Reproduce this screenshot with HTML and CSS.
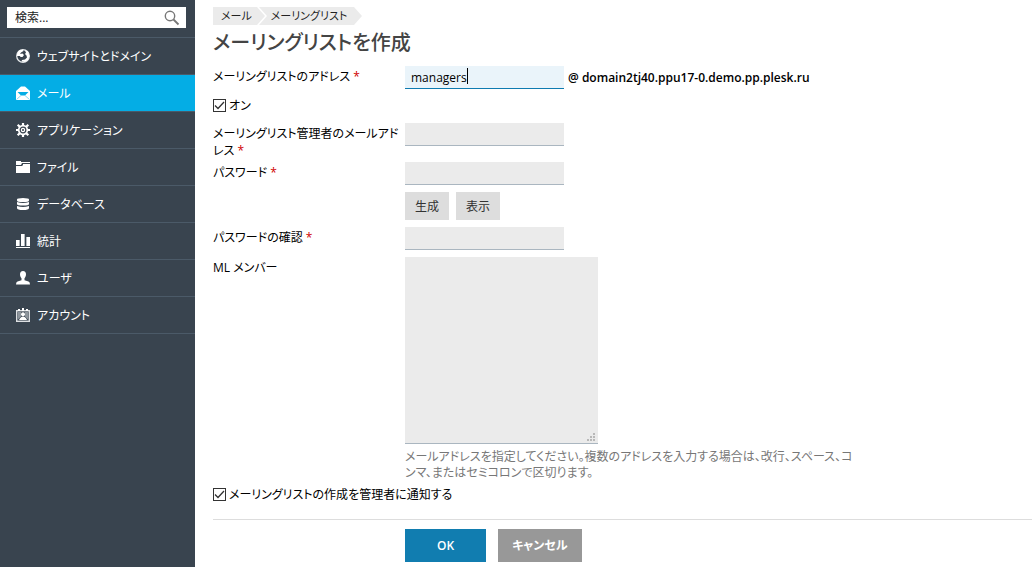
FILE: index.html
```html
<!DOCTYPE html>
<html lang="ja">
<head>
    <meta charset="UTF-8">
    <meta name="viewport" content="width=device-width, initial-scale=1.0">
    <title>メーリングリストを作成</title>
    <link rel="stylesheet" href="styles.css">
</head>
<body>
    <aside class="sidebar">
        <form class="search" role="search">
            <input type="text" class="search-input" placeholder="検索..." aria-label="検索">
            <button type="submit" class="search-button" aria-label="検索">
                <svg width="16" height="16" viewBox="0 0 16 16" fill="none" stroke="#777"><circle cx="6" cy="6" r="4.7" stroke-width="1.4"/><path d="M9.5 9.5l5 5" stroke-width="1.8"/></svg>
            </button>
        </form>
        <nav class="menu">
            <a href="#" class="menu-item">
                <svg width="14" height="14" viewBox="0 0 14 14"><circle cx="7" cy="7" r="6.3" fill="#39444f" stroke="#e4e7e9" stroke-width="1.3"/><path fill="#fff" d="M1 5l2-3.500L7 .5 7.500 2 5 3.500l-1 1.500 2.500-.5L8 6 6.500 8 4.500 8 4 7 1 7zM8.500 1l3.500 1.500L13.500 7 12 11 9 13 5.500 12.500 6 11 9 10.500 11 8.500 10.500 6.500 9 5 10 3.500z"/></svg>
                ウェブサイトとドメイン
            </a>
            <a href="#" class="menu-item active">
                <svg width="14" height="14" viewBox="0 0 14 14"><path d="M0 5l5-4.500h4L14 5v9H0z" fill="#fff"/><path d="M1.500 6h11L9 9.500H5z" fill="#04ade5"/><path d="M3 6l1-2h6l1 2z" fill="#fff"/><path d="M.5 13.500L5 9.500M13.500 13.500L9 9.500" stroke="#6cceef" stroke-width=".8"/></svg>
                メール
            </a>
            <a href="#" class="menu-item">
                <svg width="14" height="14" viewBox="0 0 14 14" fill="none" stroke="#fff"><circle cx="7" cy="7" r="4.300" stroke-width="1.700"/><circle cx="7" cy="7" r="1.600" stroke-width="1.200"/><path stroke-width="2.200" d="M7 0v2.500M7 11.500V14M0 7h2.500M11.500 7H14M1.700 1.700L4 4M10 10l2.300 2.300M12.300 1.700L10 4M4 10l-2.300 2.300"/></svg>
                アプリケーション
            </a>
            <a href="#" class="menu-item">
                <svg width="14" height="14" viewBox="0 0 14 14" fill="#fff"><path d="M0 1h5v1h9v1H6L5 5H0zM7 4h7v1H7z"/><path d="M0 6h6l1-1h7v8H0z"/></svg>
                ファイル
            </a>
            <a href="#" class="menu-item">
                <svg width="14" height="14" viewBox="0 0 14 14" fill="#fff"><path d="M1 2.500Q1 1 7 1t6 1.500v1Q13 5 7 5T1 3.500zM1 5q6 2.200 12 0v2q0 1.500-6 1.500T1 7zM1 9q6 2.200 12 0v2q0 2-6 2t-6-2z"/></svg>
                データベース
            </a>
            <a href="#" class="menu-item">
                <svg width="14" height="14" viewBox="0 0 14 14" fill="#fff"><path d="M0 6h4v6H0zM5 0h4v12H5zM10 3h4v9h-4zM0 13h14v1H0z"/><path d="M3 6h1v6H3zM8 0h1v12H8zM10 3h1v9h-1z" fill="#b5babe"/></svg>
                統計
            </a>
            <a href="#" class="menu-item">
                <svg width="14" height="14" viewBox="0 0 14 14" fill="#fff"><path d="M7 0c2 0 3 1.300 3 3.300 0 1.800-.7 3-1.500 3.900V9.200l4 1.300Q14 11 14 13.500H0Q0 11 1.500 10.500l4-1.300V7.200C4.700 6.300 4 5.100 4 3.300 4 1.300 5 0 7 0z"/></svg>
                ユーザ
            </a>
            <a href="#" class="menu-item">
                <svg width="14" height="14" viewBox="0 0 14 14" fill="#fff"><rect x=".7" y="2.700" width="12.600" height="10.600" fill="none" stroke="#dde0e3" stroke-width="1.400"/><path d="M2 1h2v2H2zM10 1h2v2h-2zM6 0h2v3H6z"/><path d="M2 4h3v4.500L2 11.500zM12 4H9v4.500l3 3z" fill="#8d959c"/><circle cx="7" cy="6.200" r="2"/><path d="M3 12Q4.500 8.500 7 8.500T11 12z"/></svg>
                アカウント
            </a>
        </nav>
    </aside>

    <main class="content">
        <nav class="breadcrumbs">
            <a href="#" class="crumb">メール</a>
            <a href="#" class="crumb">メーリングリスト</a>
        </nav>
        <h1>メーリングリストを作成</h1>

        <form class="form">
            <div class="row">
                <label class="row-label" for="address">メーリングリストのアドレス <span class="required">*</span></label>
                <div class="field field-inline">
                    <div class="focus-wrap">
                        <input type="text" id="address" class="text-input focused" value="managers">
                        <span class="caret"></span>
                    </div>
                    <span class="domain">@ domain2tj40.ppu17-0.demo.pp.plesk.ru</span>
                </div>
            </div>
            <div class="check-row">
                <input type="checkbox" id="enabled" class="checkbox" checked>
                <label for="enabled">オン</label>
            </div>
            <div class="row">
                <label class="row-label" for="admin">メーリングリスト管理者のメールアドレス <span class="required">*</span></label>
                <div class="field"><input type="text" id="admin" class="text-input"></div>
            </div>
            <div class="row">
                <label class="row-label" for="password">パスワード <span class="required">*</span></label>
                <div class="field">
                    <input type="password" id="password" class="text-input">
                    <div class="password-tools">
                        <button type="button" class="small-button">生成</button>
                        <button type="button" class="small-button">表示</button>
                    </div>
                </div>
            </div>
            <div class="row">
                <label class="row-label" for="confirm">パスワードの確認 <span class="required">*</span></label>
                <div class="field"><input type="password" id="confirm" class="text-input"></div>
            </div>
            <div class="row">
                <label class="row-label" for="members">ML メンバー</label>
                <div class="field members-field">
                    <div class="members-wrap">
                        <textarea id="members" class="members"></textarea>
                        <svg class="grip" width="8" height="8" viewBox="0 0 8 8" fill="#b8b8b8"><path d="M6 0h2v2H6zM3 3h2v2H3zM6 3h2v2H6zM0 6h2v2H0zM3 6h2v2H3zM6 6h2v2H6z"/></svg>
                    </div>
                    <p class="hint">メールアドレスを指定してください。複数のアドレスを入力する場合は、改行、スペース、コンマ、またはセミコロンで区切ります。</p>
                </div>
            </div>
            <div class="check-row">
                <input type="checkbox" id="notify" class="checkbox" checked>
                <label for="notify">メーリングリストの作成を管理者に通知する</label>
            </div>
            <div class="actions">
                <button type="submit" class="action-button ok">OK</button>
                <button type="button" class="action-button cancel">キャンセル</button>
            </div>
        </form>
    </main>
</body>
</html>
```
FILE: styles.css
```css
* {
    margin: 0;
    padding: 0;
    box-sizing: border-box;
}
body {
    display: flex;
    min-height: 100vh;
    background: #fff;
    color: #000;
    font-family: "Open Sans", "Noto Sans CJK JP", sans-serif;
    font-size: 12px;
    line-height: 17px;
    font-feature-settings: "palt";
}
input, textarea, button {
    font: inherit;
    font-feature-settings: inherit;
    border: none;
    border-radius: 0;
    outline: none;
}
button {
    cursor: pointer;
}

/* sidebar */
.sidebar {
    flex: none;
    width: 195px;
    background: #39444f;
}
.search {
    display: flex;
    height: 21px;
    margin: 7px 9px 9px 7px;
    background: #fff;
}
.search-input {
    flex: 1;
    min-width: 0;
    padding-left: 8px;
    background: none;
}
.search-input::placeholder {
    color: #222;
}
.search-button {
    display: flex;
    align-items: center;
    padding: 0 6px;
    background: none;
}
.menu-item {
    display: flex;
    align-items: center;
    gap: 7px;
    height: 37px;
    padding-left: 16px;
    border-top: 1px solid #4b5a68;
    color: #fff;
    text-decoration: none;
}
.menu {
    border-bottom: 1px solid #4b5a68;
}
.menu-item.active {
    background: #04ade5;
}

/* content */
.content {
    flex: 1;
    min-width: 0;
    padding: 7px 0 4px 18px;
}
.breadcrumbs {
    display: flex;
    gap: 2px;
}
.crumb {
    position: relative;
    height: 18px;
    padding: 0 7px 0 12px;
    background: #ebebeb;
    color: #222;
    font-size: 11px;
    line-height: 18px;
    text-decoration: none;
}
.crumb:first-child {
    z-index: 1;
    padding: 0 5px 0 8px;
}
.crumb::before, .crumb::after {
    content: "";
    position: absolute;
    top: 0;
    left: 100%;
    border: 9px solid transparent;
    border-left: 8px solid #ebebeb;
    border-right: none;
}
.crumb::before {
    margin-left: 2px;
    border-left-color: #fff;
}
h1 {
    margin-bottom: 9px;
    padding-top: 4px;
    color: #444;
    font-size: 20px;
    font-weight: 500;
    line-height: 28px;
}
.row {
    display: flex;
}
.row-label {
    flex: none;
    width: 192px;
    padding: 2px 4px 3px 0;
}
.required {
    color: #d00000;
}
.field {
    flex: 1;
    min-width: 0;
}
.field-inline {
    display: flex;
    align-items: flex-start;
    gap: 4px;
}
.focus-wrap, .members-wrap {
    position: relative;
}
.text-input {
    display: block;
    width: 159px;
    height: 23px;
    margin-bottom: 7px;
    padding: 0 6px;
    background: #ebebeb;
    border-bottom: 1px solid #aab6c0;
}
.text-input.focused {
    background: #eaf4fa;
    border-bottom-color: #0f7bb0;
}
.caret {
    position: absolute;
    top: 2px;
    left: 62px;
    width: 1px;
    height: 16px;
    background: #000;
}
.domain {
    padding-top: 3px;
    font-weight: 600;
}
.check-row {
    display: flex;
    align-items: center;
    gap: 3px;
    height: 27px;
    padding-bottom: 8px;
}
.checkbox {
    appearance: none;
    width: 13px;
    height: 13px;
    border: 1px solid #333;
    background: #fff;
}
.checkbox:checked {
    background: #fff url("data:image/svg+xml,%3Csvg xmlns='http://www.w3.org/2000/svg' viewBox='0 0 11 11'%3E%3Cpath d='M1 5.500l3 3 6-6.500' fill='none' stroke='%23333' stroke-width='1.300'/%3E%3C/svg%3E");
}
.password-tools {
    display: flex;
    gap: 7px;
    margin-bottom: 7px;
}
.small-button {
    height: 28px;
    padding: 0 10px;
    background: #ddd;
    color: #333;
}
.members-field {
    max-width: 450px;
}
.members-wrap {
    width: 193px;
}
.members {
    display: block;
    width: 100%;
    height: 187px;
    padding: 4px 6px;
    background: #ebebeb;
    border-bottom: 1px solid #aab6c0;
    resize: none;
}
.grip {
    position: absolute;
    right: 3px;
    bottom: 3px;
}
.hint {
    padding: 5px 0 4px;
    color: #777;
    line-height: 16px;
}
.actions {
    display: flex;
    gap: 12px;
    margin-top: 7px;
    padding: 9px 0 0 192px;
    border-top: 1px solid #ddd;
}
.action-button {
    height: 33px;
    color: #fff;
    font-weight: 600;
}
.ok {
    padding: 0 32px;
    background: #117db0;
}
.cancel {
    padding: 0 14px;
    background: #989898;
}
```
